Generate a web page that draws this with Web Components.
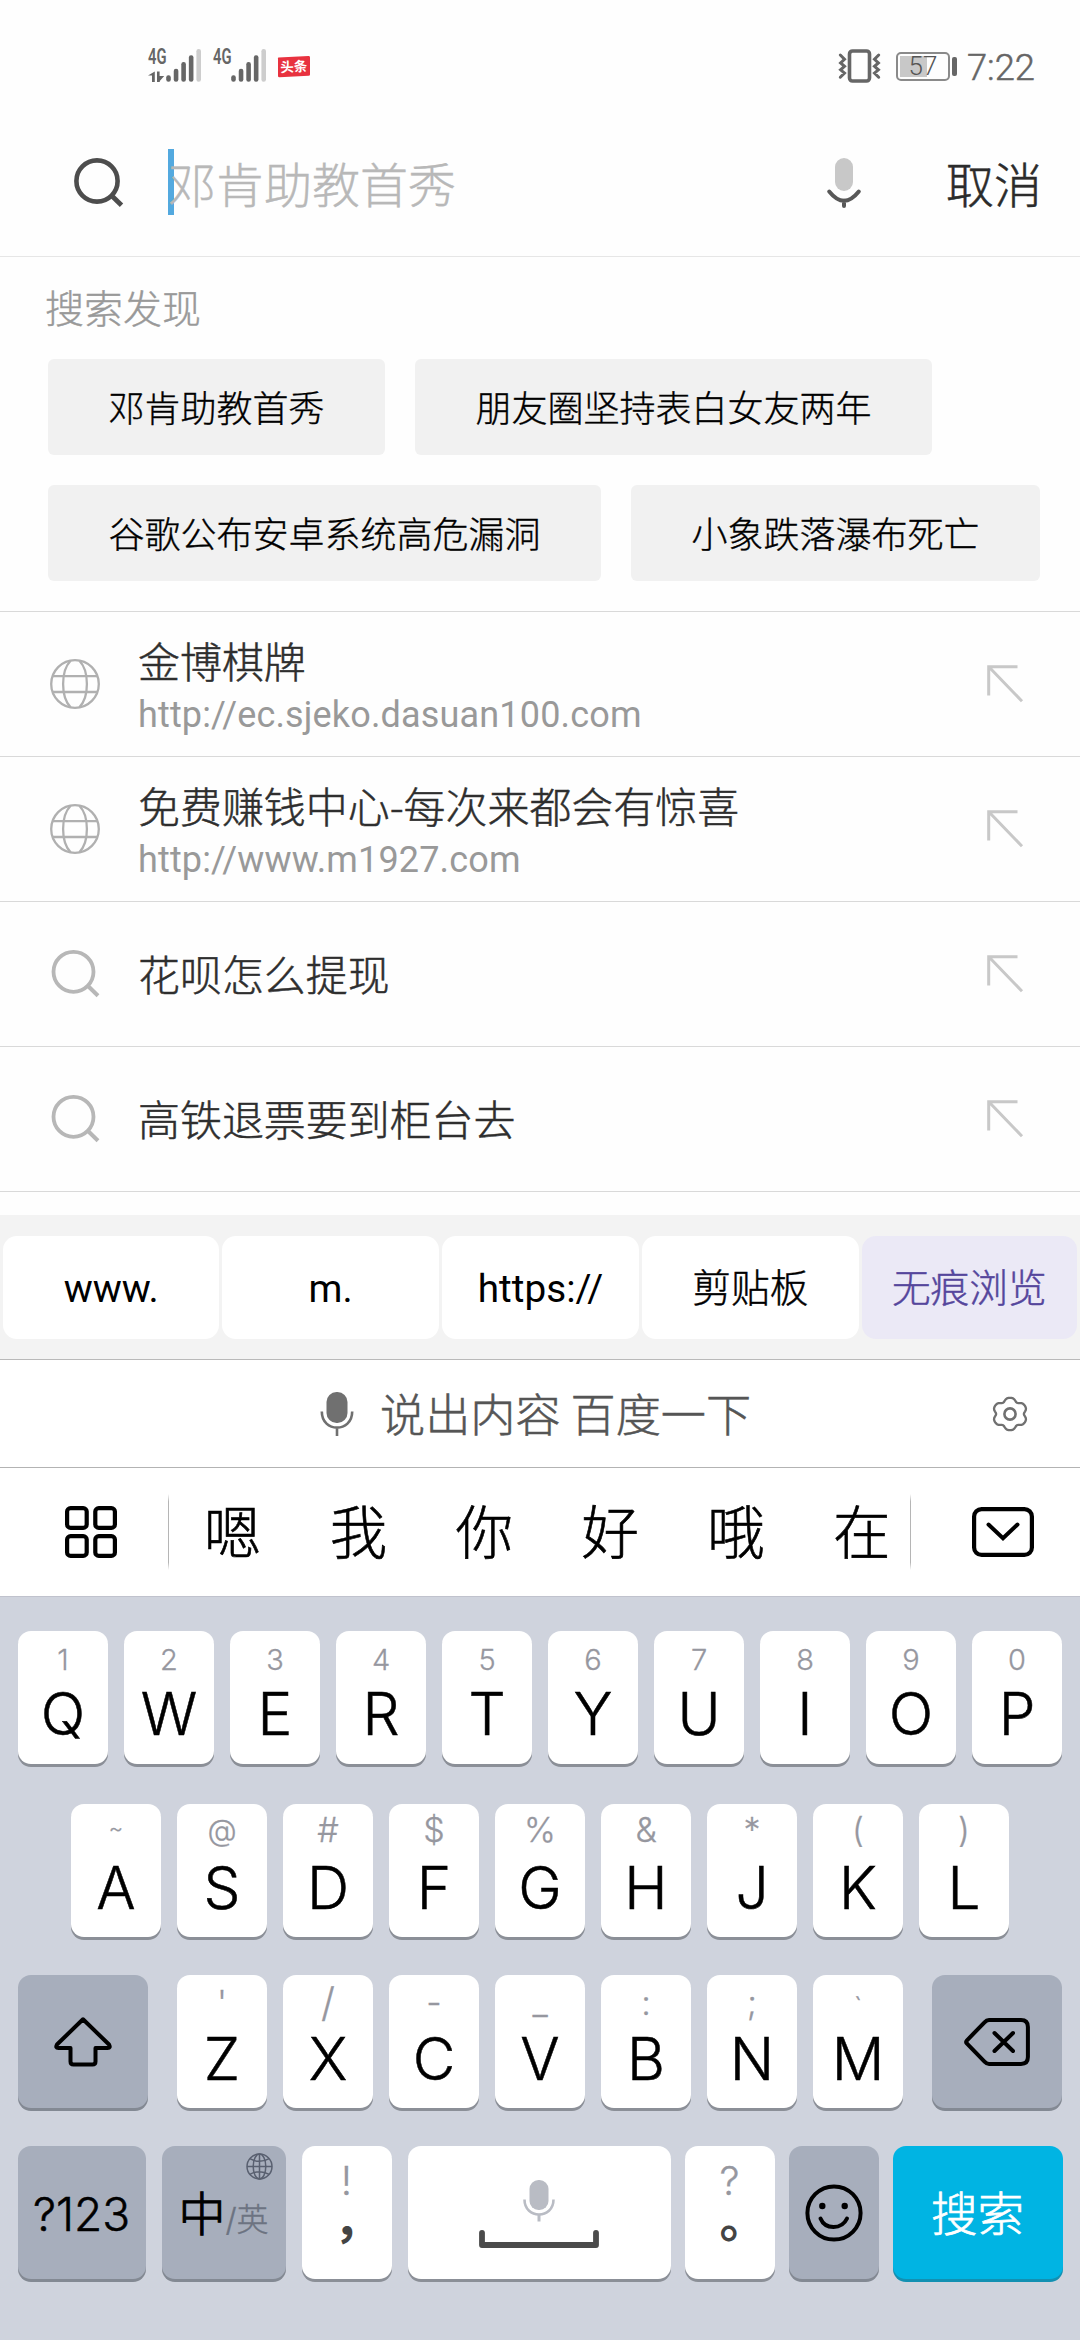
<!DOCTYPE html>
<html lang="zh-CN">
<head>
<meta charset="utf-8">
<title>搜索</title>
<style>
html,body{margin:0;padding:0}
body{width:1080px;height:2340px;overflow:hidden;background:#fefefe;font-family:"Noto Sans CJK SC","Roboto",sans-serif;font-weight:300;color:#333}
</style>
</head>
<body>
<phone-screen>
  <status-bar time="7:22" battery="57"></status-bar>
  <search-bar placeholder="邓肯助教首秀">取消</search-bar>
  <discover-panel heading="搜索发现">
    <tag-chip>邓肯助教首秀</tag-chip>
    <tag-chip>朋友圈坚持表白女友两年</tag-chip>
    <tag-chip>谷歌公布安卓系统高危漏洞</tag-chip>
    <tag-chip>小象跌落瀑布死亡</tag-chip>
  </discover-panel>
  <suggest-list>
    <suggest-row icon="globe" url="http://ec.sjeko.dasuan100.com">金博棋牌</suggest-row>
    <suggest-row icon="globe" url="http://www.m1927.com">免费赚钱中心-每次来都会有惊喜</suggest-row>
    <suggest-row icon="find">花呗怎么提现</suggest-row>
    <suggest-row icon="find">高铁退票要到柜台去</suggest-row>
  </suggest-list>
  <quick-bar>
    <quick-pill style="flex-grow:216">www.</quick-pill>
    <quick-pill style="flex-grow:216">m.</quick-pill>
    <quick-pill style="flex-grow:197">https://</quick-pill>
    <quick-pill style="flex-grow:216" cjk>剪贴板</quick-pill>
    <quick-pill style="flex-grow:215" cjk accent>无痕浏览</quick-pill>
  </quick-bar>
  <voice-bar>说出内容 百度一下</voice-bar>
  <candidate-bar>
    <span>嗯</span><span>我</span><span>你</span><span>好</span><span>哦</span><span>在</span>
  </candidate-bar>
  <soft-keyboard>
    <key-row style="height:173px;--drop:21.5px">
      <kb-key hint="1">Q</kb-key><kb-key hint="2">W</kb-key><kb-key hint="3">E</kb-key><kb-key hint="4">R</kb-key><kb-key hint="5">T</kb-key><kb-key hint="6">Y</kb-key><kb-key hint="7">U</kb-key><kb-key hint="8">I</kb-key><kb-key hint="9">O</kb-key><kb-key hint="0">P</kb-key>
    </key-row>
    <key-row style="height:171px;--hint:34px;--lh:52px">
      <kb-key hint="~" style="--hint:22px;--lh:49px">A</kb-key><kb-key hint="@" style="--hint:30px">S</kb-key><kb-key hint="#">D</kb-key><kb-key hint="$">F</kb-key><kb-key hint="%">G</kb-key><kb-key hint="&amp;">H</kb-key><kb-key hint="*">J</kb-key><kb-key hint="(">K</kb-key><kb-key hint=")">L</kb-key>
    </key-row>
    <key-row style="height:171px;--hint:34px;--lh:56px">
      <kb-key dark style="width:130px;margin-right:13px"><ui-icon name="shift"></ui-icon></kb-key>
      <kb-key hint="'">Z</kb-key><kb-key hint="/" style="--hint:40px">X</kb-key><kb-key hint="-">C</kb-key><kb-key hint="_">V</kb-key><kb-key hint=":">B</kb-key><kb-key hint=";">N</kb-key><kb-key hint="`" style="--hint:26px;--lh:64px">M</kb-key>
      <kb-key dark style="width:130px;margin-left:13px"><ui-icon name="erase"></ui-icon></kb-key>
    </key-row>
    <key-row style="height:171px;gap:14px">
      <kb-key dark wide style="width:128px;margin-right:2px;--label:46px">?123</kb-key>
      <lang-key style="margin-right:2px"></lang-key>
      <kb-key hint="!" punct style="margin-right:2px;--nudge:22px">，</kb-key>
      <space-key></space-key>
      <kb-key hint="?" punct>。</kb-key>
      <kb-key dark style="width:90px"><ui-icon name="smile"></ui-icon></kb-key>
      <kb-key blue wide style="width:170px;--label:46.5px">搜索</kb-key>
    </key-row>
  </soft-keyboard>
</phone-screen>

<script>
const mount = (el, css, html) => {
  const root = el.attachShadow({mode: 'open'});
  root.innerHTML = `<style>${css}</style>${html}`;
  return root;
};

// Six-lobed outline for the settings gear.
const gearPath = (() => {
  const pts = [];
  for (let a = 0; a < 360; a += 5) {
    const t = a * Math.PI / 180;
    const r = 14.9 + 1.6 * Math.cos(6 * t) - 0.35 * Math.cos(12 * t);
    pts.push(`${(18 + 1.07 * r * Math.sin(t)).toFixed(2)} ${(18 - r * Math.cos(t)).toFixed(2)}`);
  }
  return 'M' + pts.join('L') + 'Z';
})();

const bars = x => [75.3, 68.7, 62, 55.3, 49].map((y, i) =>
  `<rect x="${x + i * 7.55}" y="${y - 49}" width="4.6" height="${81.8 - y}" rx="2.2" fill="${i === 4 ? '#cdcdcd' : '#666'}"/>`).join('');

const network = '<text x="0" y="15.300" font-family="Roboto" font-weight="600" font-size="21.500" fill="#666" textLength="18.500" lengthAdjust="spacingAndGlyphs">4G</text>';

const ICONS = {
  signal1: [54, 34, `${network}<path d="M6.8 22.5V33H4V26.5H0Z M9 22.5h2.6v4.5l4.600 0-4.400 5v1H9z" fill="#666"/>${bars(18.2)}`],
  signal2: [54, 34, `${network}${bars(18.2)}`],
  badge: [34, 22, `<path d="M1 2.6Q.2 1.8 1.5 1.4L31.5 0Q33 0 33 1.4V18.4Q33 19.6 31.6 19.7L2.4 21.2Q1 21.2 1 20Z" fill="#e8323f"/><text x="16.8" y="15.6" text-anchor="middle" font-family="Noto Sans CJK SC" font-weight="700" font-size="13.500" fill="#fff" transform="rotate(-2.5 17 11)">头条</text>`],
  vibrate: [44, 34, `<rect x="11.5" y="2" width="20" height="30" rx="3" fill="none" stroke="#666" stroke-width="3.6"/><path d="M2.3 6L6.5 10.2 2.6 14 6.5 17.3 2.6 20.8 6.5 24 2.3 28.2M40.7 6L36.5 10.2 40.4 14 36.5 17.3 40.4 20.8 36.5 24 40.7 28.2" fill="none" stroke="#666" stroke-width="3" stroke-linecap="round"/>`],
  lens: [50, 50, `<circle cx="23" cy="23" r="20.6" fill="none" stroke="#4d4d4d" stroke-width="4.6"/><path d="M37.5 37.5L47.5 47.3" stroke="#4d4d4d" stroke-width="4.8"/>`],
  find: [50, 50, `<circle cx="23.5" cy="22.8" r="20" fill="none" stroke="#b7b7b7" stroke-width="3.8"/><path d="M37.5 36.5L48 46.8" stroke="#b7b7b7" stroke-width="4"/>`],
  mic: [34, 52, `<rect x="8" y="1" width="18" height="33" rx="9" fill="#c8c8c8"/><path d="M2.2 34.5Q17 53 31.8 34.5M17 43.5V49" fill="none" stroke="#585858" stroke-width="4" stroke-linecap="round"/>`],
  globe: [50, 50, `<g fill="none" stroke="#b0b0b0" stroke-width="2.3"><circle cx="25" cy="25" r="23.8"/><path d="M20.600 1.800C10.600 12 10.600 38 20.600 48.200M29.400 1.800C39.400 12 39.400 38 29.400 48.200M2.800 17.200H47.200M2.800 33H47.200"/></g>`],
  arrow: [37, 38, `<path d="M30.500 1.700H1.700V30.500M2 2L35 36.200" fill="none" stroke="#c8c8c8" stroke-width="3"/>`],
  micFill: [34, 46, `<rect x="6.500" y="1" width="21" height="31" rx="10" fill="#707070"/><path d="M1.800 20.500C1.800 42 32.200 42 32.200 20.500M17 36.500V45" fill="none" stroke="#707070" stroke-width="2.600"/>`],
  gear: [36, 36, `<path d="${gearPath}" fill="none" stroke="#707070" stroke-width="2.300"/><circle cx="18" cy="18" r="5.600" fill="none" stroke="#707070" stroke-width="2.600"/>`],
  grid: [52, 52, `<g fill="none" stroke="#000" stroke-width="4.200"><rect x="2.100" y="2.100" width="19.600" height="19.800" rx="3.500"/><rect x="30.300" y="2.100" width="19.600" height="19.800" rx="3.500"/><rect x="2.100" y="30.100" width="19.600" height="19.800" rx="3.500"/><rect x="30.300" y="30.100" width="19.600" height="19.800" rx="3.500"/></g>`],
  collapse: [62, 50, `<rect x="2.100" y="2.100" width="57.800" height="45.800" rx="7.500" fill="none" stroke="#000" stroke-width="4.200"/><path d="M16.500 17.500L31 31.200 45.500 17.500" fill="none" stroke="#000" stroke-width="4" stroke-linecap="round"/>`],
  shift: [58, 50, `<path d="M29 2.300L55 27.500Q57 31 53.500 31H41.500V44.500Q41.500 47.500 38.500 47.500H19.500Q16.500 47.500 16.500 44.500V31H4.500Q1 31 3 27.500Z" fill="none" stroke="#000" stroke-width="4" stroke-linejoin="round"/>`],
  erase: [66, 48, `<path d="M25 2.100H57Q63.900 2.100 63.900 9V39Q63.900 45.900 57 45.900H25Q22.500 45.900 20.500 43.700L2.800 25.500Q1.500 24 2.800 22.500L20.500 4.300Q22.500 2.100 25 2.100Z M30.500 15L49 33M49 15L30.500 33" fill="none" stroke="#000" stroke-width="4" stroke-linecap="round"/>`],
  world: [27, 27, `<g fill="none" stroke="#596070" stroke-width="1.500"><circle cx="13.500" cy="13.500" r="12.500"/><ellipse cx="13.500" cy="13.500" rx="6.300" ry="12.500"/><path d="M13.500 1V26M1 13.500H26M3.800 5.600Q13.500 11 23.200 5.600M3.800 21.400Q13.500 16 23.200 21.400"/></g>`],
  spaceMic: [32, 42, `<rect x="6.500" y="0" width="19" height="30" rx="9" fill="#b9bcc4"/><path d="M1.500 19.500C1.500 39.500 30.500 39.500 30.500 19.500" fill="none" stroke="#b9bcc4" stroke-width="2.600"/><path d="M16 35V41.500" stroke="#b9bcc4" stroke-width="3"/>`],
  spaceBar: [120, 18, `<path d="M3 2.800V15H117V2.800" fill="none" stroke="#4b4b4b" stroke-width="5.800" stroke-linecap="round" stroke-linejoin="round"/>`],
  smile: [58, 58, `<circle cx="29" cy="29" r="26.600" fill="none" stroke="#000" stroke-width="4"/><circle cx="17.300" cy="22" r="3.200"/><circle cx="39.700" cy="22" r="3.200"/><path d="M15.500 34.500Q19 43 28.500 43T42 34.500" fill="none" stroke="#000" stroke-width="4" stroke-linecap="round"/>`]
};

customElements.define('ui-icon', class extends HTMLElement {
  constructor() {
    super();
    const [w, h, body] = ICONS[this.getAttribute('name')];
    mount(this, `:host{display:block;flex:none;width:${w}px;height:${h}px}svg{display:block;overflow:visible}`,
      `<svg width="${w}" height="${h}" viewBox="0 0 ${w} ${h}">${body}</svg>`);
  }
});

customElements.define('phone-screen', class extends HTMLElement {
  constructor() {
    super();
    mount(this, ':host{display:flex;flex-direction:column;width:1080px;height:2340px}', '<slot></slot>');
  }
});

customElements.define('status-bar', class extends HTMLElement {
  constructor() {
    super();
    mount(this, `
      :host{display:flex;box-sizing:border-box;height:112px;padding:49px 45px 0 148px;align-items:flex-start;font-family:Roboto,sans-serif;color:#666}
      .s2{margin-left:11px}.badge{margin:7px auto 0 10px}
      .batt{display:flex;margin:3px 0 0 14px;align-items:center}
      .cell{box-sizing:border-box;width:54px;height:29px;border:2px solid #8a8a8a;border-radius:5px;display:flex;align-items:center;justify-content:center;font-size:26px;line-height:25px;color:#555;background:linear-gradient(#c8c8c8,#c8c8c8) 2px 2px/27px 21px no-repeat}
      .cap{width:5px;height:19px;border-radius:2px;background:#666;margin-left:2px}
      .time{font-size:36.3px;line-height:44px;margin:-3px 0 0 10px;font-weight:300;-webkit-text-stroke:.5px}`,
      `<ui-icon name="signal1"></ui-icon><ui-icon class="s2" name="signal2"></ui-icon><ui-icon class="badge" name="badge"></ui-icon>
      <ui-icon name="vibrate"></ui-icon><div class="batt"><div class="cell">${this.getAttribute('battery')}</div><div class="cap"></div></div><div class="time">${this.getAttribute('time')}</div>`);
  }
});

customElements.define('search-bar', class extends HTMLElement {
  constructor() {
    super();
    mount(this, `
      :host{display:flex;box-sizing:border-box;height:145px;padding:0 38px 0 74px;align-items:center;border-bottom:1px solid #e6e6e6;font-size:48px;line-height:60px}
      .lens{margin-bottom:3px}
      .field{flex:1;display:flex;align-items:center;margin-left:44px}
      .caret{width:6px;height:66px;background:#53a9df;margin-bottom:4px}
      .ph{color:#b8b8b8;margin:-5px 0 0 -6px;-webkit-text-stroke:.4px}
      .mic{margin:0 85px 2px 0}
      .go{margin-top:-4px;color:#2b2b2b;-webkit-text-stroke:.5px}`,
      `<ui-icon class="lens" name="lens"></ui-icon><div class="field"><div class="caret"></div><div class="ph">${this.getAttribute('placeholder')}</div></div><ui-icon class="mic" name="mic"></ui-icon><div class="go"><slot></slot></div>`);
  }
});

customElements.define('discover-panel', class extends HTMLElement {
  constructor() {
    super();
    mount(this, `
      :host{display:block;box-sizing:border-box;height:354px;padding:28px 0 0 48px}
      .t{font-size:39px;line-height:42px;color:#999;margin-left:-3px;-webkit-text-stroke:.4px}
      .chips{display:flex;flex-wrap:wrap;gap:30px;margin-top:32px}`,
      `<div class="t">${this.getAttribute('heading')}</div><div class="chips"><slot></slot></div>`);
  }
});

customElements.define('tag-chip', class extends HTMLElement {
  constructor() {
    super();
    mount(this, ':host{display:block;height:96px;line-height:94px;padding:0 60.5px;font-size:36px;color:#000;background:#f1f1f1;border-radius:6px;-webkit-text-stroke:.35px}', '<slot></slot>');
  }
});

customElements.define('suggest-list', class extends HTMLElement {
  constructor() {
    super();
    mount(this, ':host{display:block;height:604px}.end{border-top:1px solid #d9d9d9}', '<slot></slot><div class="end"></div>');
  }
});

customElements.define('suggest-row', class extends HTMLElement {
  constructor() {
    super();
    const url = this.getAttribute('url');
    mount(this, `
      :host{display:flex;box-sizing:border-box;height:145px;border-top:1px solid #d9d9d9;align-items:center;padding:0 56px 0 50px}
      .txt{flex:1;margin-left:38px;padding-top:${url ? 5 : 0}px}
      .t{font-size:41.95px;line-height:50px;padding-bottom:${url ? 6 : 2}px;white-space:nowrap;color:#2e2e2e;-webkit-text-stroke:.5px}
      .u{font:400 36px/48px Roboto,sans-serif;color:#999;letter-spacing:.16px}`,
      `<ui-icon name="${this.getAttribute('icon')}"></ui-icon><div class="txt"><div class="t"><slot></slot></div>${url ? `<div class="u">${url}</div>` : ''}</div><ui-icon name="arrow"></ui-icon>`);
  }
});

customElements.define('quick-bar', class extends HTMLElement {
  constructor() {
    super();
    mount(this, ':host{display:flex;box-sizing:border-box;height:144px;padding:21px 3px 20px;gap:3px;background:#f3f3f3}', '<slot></slot>');
  }
});

customElements.define('quick-pill', class extends HTMLElement {
  constructor() {
    super();
    mount(this, `:host{display:flex;box-sizing:border-box;padding-top:2px;flex-basis:0;align-items:center;justify-content:center;background:#fff;border-radius:14px;font:400 38.7px/50px Roboto,"Noto Sans CJK SC",sans-serif;color:#000}
      :host([cjk]){font-weight:300;-webkit-text-stroke:.45px}
      :host([accent]){background:#ebe9f6;color:#55469c}`, '<slot></slot>');
  }
});

customElements.define('voice-bar', class extends HTMLElement {
  constructor() {
    super();
    mount(this, `
      :host{display:flex;box-sizing:border-box;height:108px;border-top:1px solid #b9b9b9;align-items:center;padding:0 52px 0 320px;background:#fff}
      .t{flex:1;font-size:45.15px;line-height:60px;color:#555;margin:-2px 0 0 26px;-webkit-text-stroke:.5px}`,
      '<ui-icon name="micFill"></ui-icon><div class="t"><slot></slot></div><ui-icon name="gear"></ui-icon>');
  }
});

customElements.define('candidate-bar', class extends HTMLElement {
  constructor() {
    super();
    mount(this, `
      :host{display:flex;box-sizing:border-box;height:129px;border-top:1px solid #b3b3b3;align-items:center;padding:0 46px 0 65px;background:#fff}
      .sep{flex:none;width:1px;height:76px;background:linear-gradient(transparent,#b5b5b5 10%,#b5b5b5 90%,transparent)}
      .sep.l{margin-left:51px}.sep.r{margin-left:auto}
      .list{display:flex;gap:68.3px;font-size:57.5px;line-height:70px;color:#000;margin:-6px 0 0 35px;-webkit-text-stroke:.6px}
      .fold{margin-left:61px}`,
      '<ui-icon name="grid"></ui-icon><div class="sep l"></div><div class="list"><slot></slot></div><div class="sep r"></div><ui-icon class="fold" name="collapse"></ui-icon>');
  }
});

customElements.define('soft-keyboard', class extends HTMLElement {
  constructor() {
    super();
    mount(this, ':host{display:block;box-sizing:border-box;height:744px;padding-top:34px;border-top:1px solid #c0c2cd;background:#cfd3dd}', '<slot></slot>');
  }
});

customElements.define('key-row', class extends HTMLElement {
  constructor() {
    super();
    mount(this, ':host{display:flex;justify-content:center;align-items:flex-start;gap:16px}', '<slot></slot>');
  }
});

const KEY = `
  :host{display:flex;flex:none;flex-direction:column;align-items:center;box-sizing:border-box;width:90px;height:133px;border-radius:13px;background:#fff;box-shadow:0 3px 0 #8b8f97;font-family:Inter,"Noto Sans CJK SC",sans-serif;color:#000}
  :host([dark]){background:#a7aebc;box-shadow:0 3px 0 #838993;justify-content:center}
  :host([blue]){background:#00b4e3;box-shadow:0 3px 0 #1290b2;color:#fff;justify-content:center}`;

customElements.define('kb-key', class extends HTMLElement {
  constructor() {
    super();
    const hint = this.getAttribute('hint');
    const css = KEY + `
      .h{height:0;font-size:var(--hint,29px);line-height:var(--lh,57px);color:#96979f;font-weight:300;-webkit-text-stroke:.3px}
      .l{font-size:58.5px;line-height:58px;margin:auto 0 var(--drop,20.5px);font-weight:300;-webkit-text-stroke:.5px}
      :host([wide]) .l{font-size:var(--label);line-height:60px;margin:0;padding-top:3px}
      :host([blue]) .l{font-weight:300;-webkit-text-stroke:.7px}
      :host([punct]) .h{font-size:40px;line-height:70px}
      :host([punct]) .l{font-family:"Noto Sans CJK SC";font-weight:700;font-size:48px;line-height:58px;color:#444;margin:auto 0 34px;padding-left:var(--nudge,28px);-webkit-text-stroke:0}`;
    mount(this, css, (hint ? `<div class="h"></div>` : '') + (this.querySelector('ui-icon') ? '<slot></slot>' : '<div class="l"><slot></slot></div>'));
    if (hint) this.shadowRoot.querySelector('.h').textContent = hint;
  }
});

customElements.define('lang-key', class extends HTMLElement {
  constructor() {
    super();
    mount(this, KEY + `
      :host{width:124px;background:#a7aebc;box-shadow:0 3px 0 #838993}
      .g{margin:7px 13px 0 auto}
      .r{display:flex;align-items:baseline;line-height:60px;margin-top:4px;font-weight:300}
      .a{font-size:47px;-webkit-text-stroke:1.1px}.b{font-size:32px;color:#6c7381;-webkit-text-stroke:.4px}`,
      '<ui-icon class="g" name="world"></ui-icon><div class="r"><span class="a">中</span><span class="b">/英</span></div>');
  }
});

customElements.define('space-key', class extends HTMLElement {
  constructor() {
    super();
    mount(this, KEY + `
      :host{width:263px;padding-top:34px}
      .b{margin-top:8px}`,
      '<ui-icon name="spaceMic"></ui-icon><ui-icon class="b" name="spaceBar"></ui-icon>');
  }
});
</script>
</body>
</html>
